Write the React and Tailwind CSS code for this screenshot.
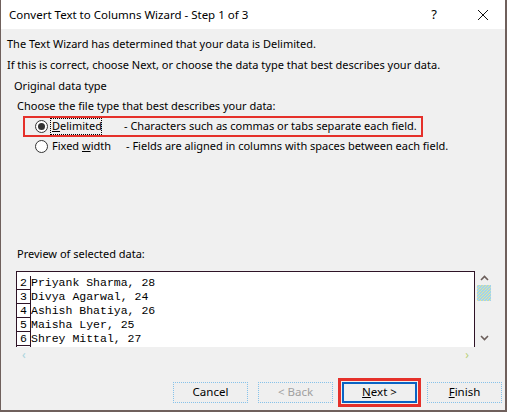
import React from "react";

const ui = { fontFamily: '"Noto Sans", "Open Sans", sans-serif' };
const mono = { fontFamily: '"Liberation Mono", "Courier New", monospace' };

const ROWS = [
  ["2", "Priyank Sharma, 28"],
  ["3", "Divya Agarwal, 24"],
  ["4", "Ashish Bhatiya, 26"],
  ["5", "Maisha Lyer, 25"],
  ["6", "Shrey Mittal, 27"],
];

function Radio({ checked }) {
  return (
    <span className="w-[13px] h-[13px] rounded-full border border-[#333] bg-white flex items-center justify-center shrink-0">
      {checked && <span className="w-[7px] h-[7px] rounded-full bg-[#333]" />}
    </span>
  );
}

function Button({ children, disabled, focused, className = "" }) {
  return (
    <div
      className={`w-[75px] h-[21px] flex items-center justify-center text-[11.5px] ${
        focused ? "border-2 border-solid border-[#0a63c4]" : "border border-dotted border-[#86c2ea]"
      } ${disabled ? "text-[#a0a0a0]" : "text-black"} bg-[#efefef] ${className}`}
    >
      {children}
    </div>
  );
}

function Chevron({ up }) {
  return (
    <svg width="9" height="6" viewBox="0 0 9 6">
      <path
        d={up ? "M1 5 L4.5 1.5 L8 5" : "M1 1 L4.5 4.5 L8 1"}
        fill="none"
        stroke="#6b5e5a"
        strokeWidth="1.6"
      />
    </svg>
  );
}

export default function App() {
  return (
    <div
      className="w-[507px] h-[412px] bg-[#f0f0f0] border-l border-r-2 border-b-2 border-[#6f605c] flex flex-col overflow-hidden text-black"
      style={ui}
    >
      {/* Title bar */}
      <div className="h-[29px] bg-white flex items-center pl-[8px] shrink-0">
        <span className="text-[11.5px]">Convert Text to Columns Wizard - Step 1 of 3</span>
        <span className="ml-auto text-[13px] mr-[40px]">?</span>
        <svg width="12" height="12" viewBox="0 0 12 12" className="mr-[16px]">
          <path d="M1 1 L11 11 M11 1 L1 11" stroke="#111" strokeWidth="1" />
        </svg>
      </div>

      <div className="text-[11px] pl-[6px] whitespace-nowrap">
        <div className="h-[21px] mt-[5px] flex items-center">The Text Wizard has determined that your data is Delimited.</div>
        <div className="h-[21px] flex items-center">If this is correct, choose Next, or choose the data type that best describes your data.</div>
        <div className="h-[21px] flex items-center pl-[7px]">Original data type</div>
        <div className="h-[19px] flex items-center pl-[10px]">Choose the file type that best describes your data:</div>

        {/* Delimited row */}
        <div className="ml-[16px] w-[400px] h-[21px] border-2 border-[#e5302a] flex items-center pl-[10px]">
          <Radio checked />
          <span className="ml-[2px] pl-[1px] h-[17px] w-[52px] flex items-center border border-dotted border-black">
            <span className="underline">D</span>elimited
          </span>
          <span className="ml-[22px]">- Characters such as commas or tabs separate each field.</span>
        </div>

        {/* Fixed width row */}
        <div className="ml-[16px] h-[18px] flex items-center pl-[12px]">
          <Radio />
          <span className="ml-[4px] w-[74px]">
            Fixed <span className="underline">w</span>idth
          </span>
          <span>- Fields are aligned in columns with spaces between each field.</span>
        </div>

        <div className="h-[20px] mt-[89px] flex items-center pl-[10px]">Preview of selected data:</div>
      </div>

      {/* Preview */}
      <div className="ml-[15px] mt-[7px] flex">
        <div className="w-[459px] flex flex-col">
          <div className="h-[76px] bg-white border-t border-l border-r border-[#2e1326] pt-[4px] overflow-hidden">
            {ROWS.map(([n, t]) => (
              <div key={n} className="h-[14px] flex items-center text-[11.5px]" style={mono}>
                <span className="w-[14px] h-[14px] border-r border-b border-[#2e1326] text-center leading-[14px]">{n}</span>
                <span className="leading-[14px]">{t}</span>
              </div>
            ))}
            <div className="w-[14px] h-[10px] border-r border-[#2e1326]" />
          </div>
          <div className="h-[16px] flex items-center justify-between px-[6px] text-[12px] leading-none">
            <span className="text-[#a9d3dc]">‹</span>
            <span className="text-[#b9d07a]">›</span>
          </div>
        </div>
        <div className="w-[18px] flex flex-col items-center pt-[4px]">
          <Chevron up />
          <svg width="14" height="16" className="mt-[4px]">
            <defs>
              <pattern id="dither" width="3" height="3" patternUnits="userSpaceOnUse">
                <rect width="3" height="3" fill="#a3d3ea" />
                <rect width="1" height="1" fill="#e8e596" />
                <rect x="2" y="1" width="1" height="1" fill="#e8e596" />
                <rect x="1" y="2" width="1" height="1" fill="#c6e4c8" />
              </pattern>
            </defs>
            <rect width="14" height="16" fill="url(#dither)" />
          </svg>
          <div className="mt-[34px]">
            <Chevron />
          </div>
        </div>
      </div>

      {/* Buttons */}
      <div className="flex items-center h-[30px] mt-[14px] pl-[172px]">
        <Button>Cancel</Button>
        <Button disabled className="ml-[10px]">&lt; Back</Button>
        <div className="ml-[5px] border-[3px] border-[#e5302a] px-[1px] py-[1px]">
          <Button focused>
            <span className="underline">N</span>ext &gt;
          </Button>
        </div>
        <Button className="ml-[6px]">
          <span className="underline">F</span>inish
        </Button>
      </div>
    </div>
  );
}
